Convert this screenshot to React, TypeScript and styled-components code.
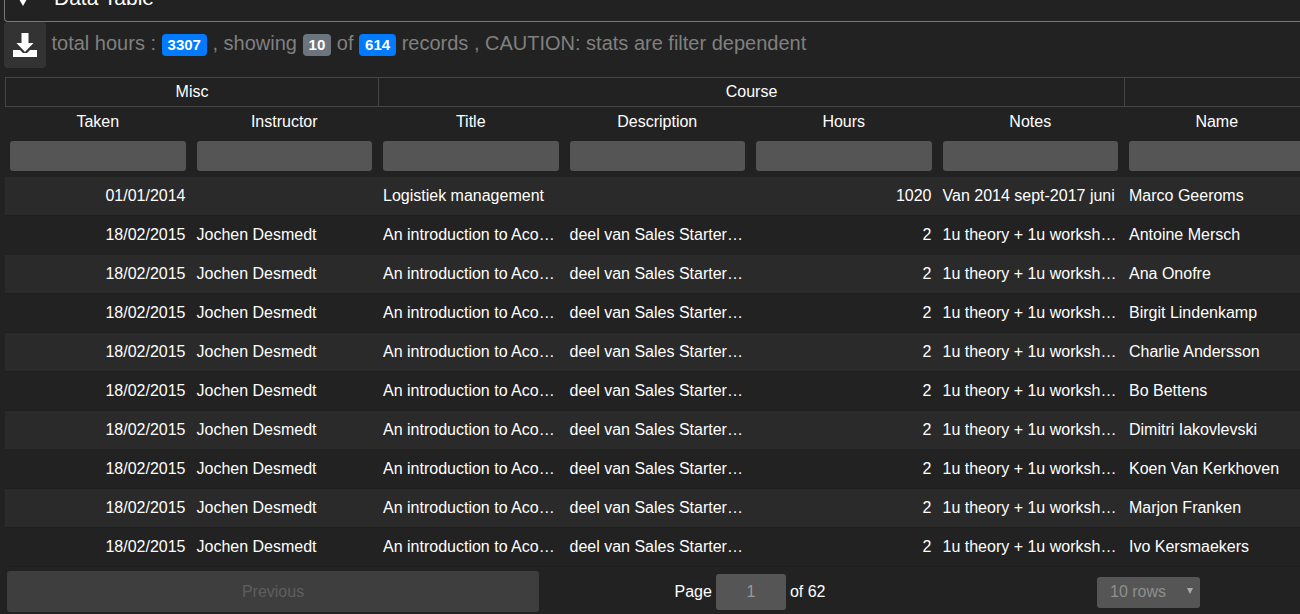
import React from 'react'
import styled, { createGlobalStyle } from 'styled-components'

const GlobalStyle = createGlobalStyle`
  html, body {
    margin: 0;
    height: 100%;
    overflow: hidden;
    background: #222222;
    color: #ffffff;
    font-family: "Liberation Sans", Arial, sans-serif;
  }
`

const Page = styled.div`
  width: 1300px;
  height: 614px;
  overflow: hidden;
  background: #222222;
`

const PanelHead = styled.div`
  box-sizing: border-box;
  display: flex;
  align-items: flex-end;
  gap: 27px;
  width: 1300px;
  height: 22px;
  margin-left: 4px;
  padding: 0 0 11px 14px;
  border: 1px solid #777777;
  border-top: 0;
  border-right: 0;
  border-radius: 0 0 0 4px;
  overflow: hidden;
  font-size: 21px;
  line-height: 24px;
`

const Caret = styled.span`
  display: block;
  width: 0;
  height: 0;
  margin-bottom: 4px;
  border-left: 4px solid transparent;
  border-right: 4px solid transparent;
  border-top: 7px solid #ffffff;
`

const StatsBar = styled.div`
  display: flex;
  align-items: flex-start;
  height: 55px;
  margin-left: 4px;
`

const DownloadButton = styled.button`
  display: flex;
  align-items: center;
  justify-content: center;
  width: 42px;
  height: 46px;
  padding: 0;
  border: 0;
  border-radius: 4px;
  background: #333333;
  color: #ffffff;
`

const Stats = styled.div`
  margin: 10px 0 0 5.500px;
  font-size: 20px;
  line-height: 23px;
  color: #808080;
  white-space: pre;
`

const Badge = styled.span<{ $tone: 'blue' | 'grey' }>`
  display: inline-block;
  padding: 3px 6px;
  border-radius: 4px;
  background: ${(p) => (p.$tone === 'blue' ? '#007bff' : '#6c757d')};
  color: #ffffff;
  font-size: 15px;
  font-weight: 700;
  line-height: 16px;
`

const TableWrap = styled.div`
  width: 1500px;
  margin-left: 5px;
`

const GroupRow = styled.div`
  display: flex;
  height: 30px;
  border-top: 1px solid #444444;
  border-bottom: 1px solid #444444;
  box-sizing: border-box;
`

const GroupCell = styled.div<{ $span: number }>`
  box-sizing: border-box;
  width: ${(p) => p.$span * 186.5}px;
  border-left: 1px solid #444444;
  text-align: center;
  font-size: 16px;
  line-height: 28px;
`

const Row = styled.div<{ $odd?: boolean }>`
  display: grid;
  grid-template-columns: repeat(8, 186.5px);
  background: ${(p) => (p.$odd ? '#2a2a2a' : 'transparent')};
`

const HeadCell = styled.div`
  height: 33px;
  padding-right: 1px;
  text-align: center;
  font-size: 16px;
  line-height: 29px;
`

const FilterRow = styled(Row)`
  height: 37px;
`

const FilterCell = styled.div`
  padding: 1px 6px 0 5px;
`

const FilterInput = styled.div`
  height: 30px;
  border-radius: 3px;
  background: #555555;
`

const DataRow = styled(Row)`
  height: 39px;
  border-bottom: 1px solid #1f1f1f;
  box-sizing: border-box;
`

const DataCell = styled.div<{ $right?: boolean }>`
  overflow: hidden;
  padding: 0 6px 0 5px;
  font-size: 16px;
  line-height: 38px;
  white-space: nowrap;
  text-overflow: ellipsis;
  text-align: ${(p) => (p.$right ? 'right' : 'left')};
`

const Pagination = styled.div`
  display: flex;
  align-items: center;
  height: 41px;
  margin: 4px 0 0 7px;
`

const PrevButton = styled.button`
  width: 532px;
  height: 41px;
  padding: 0;
  border: 0;
  border-radius: 3px;
  background: #3e3e3e;
  color: #5f5f5f;
  font-family: inherit;
  font-size: 16px;
`

const PageInfo = styled.div`
  display: flex;
  align-items: center;
  justify-content: center;
  gap: 4px;
  width: 422px;
  font-size: 16px;
`

const PageInput = styled.div`
  box-sizing: border-box;
  width: 70px;
  height: 36px;
  border-radius: 3px;
  background: #555555;
  color: #999999;
  text-align: center;
  line-height: 36px;
`

const RowSelect = styled.div`
  display: flex;
  align-items: center;
  justify-content: space-between;
  box-sizing: border-box;
  width: 103px;
  height: 31px;
  margin: 1px 0 0 136px;
  padding: 0 7px 0 13px;
  border-radius: 3px;
  background: #555555;
  color: #8f8f8f;
  font-size: 16px;
`

const SelectArrow = styled.span`
  border-left: 3px solid transparent;
  border-right: 3px solid transparent;
  border-top: 6px solid #aaaaaa;
  margin-bottom: 2px;
`

const headers = ['Taken', 'Instructor', 'Title', 'Description', 'Hours', 'Notes', 'Name', '']

const names = [
  'Antoine Mersch',
  'Ana Onofre',
  'Birgit Lindenkamp',
  'Charlie Andersson',
  'Bo Bettens',
  'Dimitri Iakovlevski',
  'Koen Van Kerkhoven',
  'Marjon Franken',
  'Ivo Kersmaekers',
]

const rows = [
  ['01/01/2014', '', 'Logistiek management', '', '1020', 'Van 2014 sept-2017 juni', 'Marco Geeroms'],
  ...names.map((name) => [
    '18/02/2015',
    'Jochen Desmedt',
    'An introduction to Acoustics',
    'deel van Sales Starter Kit training',
    '2',
    '1u theory + 1u workshop sessions',
    name,
  ]),
]

const App = (): JSX.Element => {
  return (
    <Page>
      <GlobalStyle />
      <PanelHead>
        <Caret />
        <span>Data Table</span>
      </PanelHead>
      <StatsBar>
        <DownloadButton aria-label="Download">
          <svg width="24" height="24" viewBox="0 0 24 24" fill="currentColor">
            <path d="M8.500 0h7v10h5L12 19 3.500 10h5z" />
            <path d="M0 17h7l3 3h4l3-3h7v7H0z" />
          </svg>
        </DownloadButton>
        <Stats>
          total hours : <Badge $tone="blue">3307</Badge> , showing <Badge $tone="grey">10</Badge> of{' '}
          <Badge $tone="blue">614</Badge> records , CAUTION: stats are filter dependent
        </Stats>
      </StatsBar>
      <TableWrap>
        <GroupRow>
          <GroupCell $span={2}>Misc</GroupCell>
          <GroupCell $span={4}>Course</GroupCell>
          <GroupCell $span={2} />
        </GroupRow>
        <Row>
          {headers.map((h, i) => (
            <HeadCell key={i}>{h}</HeadCell>
          ))}
        </Row>
        <FilterRow>
          {headers.map((_, i) => (
            <FilterCell key={i}>
              <FilterInput />
            </FilterCell>
          ))}
        </FilterRow>
        {rows.map((row, r) => (
          <DataRow key={r} $odd={r % 2 === 0}>
            {row.map((value, c) => (
              <DataCell key={c} $right={c === 0 || c === 4}>
                {value}
              </DataCell>
            ))}
          </DataRow>
        ))}
      </TableWrap>
      <Pagination>
        <PrevButton disabled>Previous</PrevButton>
        <PageInfo>
          <span>Page</span>
          <PageInput>1</PageInput>
          <span>of 62</span>
        </PageInfo>
        <RowSelect>
          10 rows
          <SelectArrow />
        </RowSelect>
      </Pagination>
    </Page>
  )
}

export default App
